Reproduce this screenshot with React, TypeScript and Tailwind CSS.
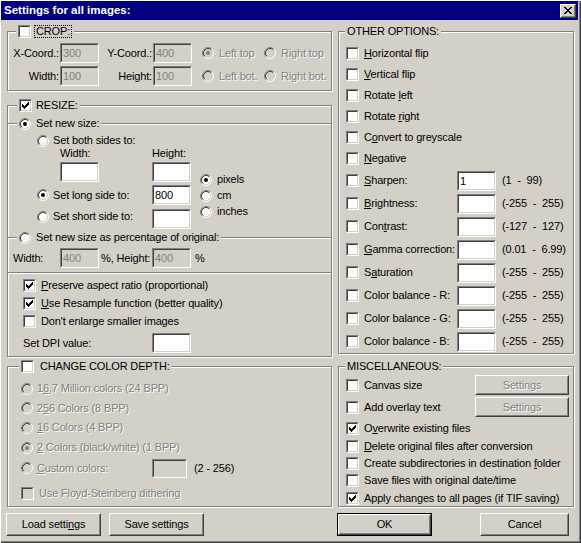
import React from "react";

type Kids = { children?: React.ReactNode };

const dis = "text-[#808080] [text-shadow:1px_1px_0_#fff]";

function CheckMark({ color }: { color: string }) {
  return (
    <svg width="7" height="7" viewBox="0 0 7 7" shapeRendering="crispEdges">
      <path
        fill={color}
        d="M6 0h1v1h-1zM5 1h2v1h-2zM0 2h1v1h-1zM4 2h3v1h-3zM0 3h2v1h-2zM3 3h3v1h-3zM0 4h5v1h-5zM1 5h3v1h-3zM2 6h1v1h-1z"
      />
    </svg>
  );
}

function Box({ checked = false, disabled = false }: { checked?: boolean; disabled?: boolean }) {
  return (
    <span className="flex h-[13px] w-[13px] shrink-0 border border-t-[#808080] border-l-[#808080] border-r-white border-b-white">
      <span
        className={`flex flex-1 items-center justify-center border border-t-[#404040] border-l-[#404040] border-r-[#d4d0c8] border-b-[#d4d0c8] ${
          disabled ? "bg-[#d4d0c8]" : "bg-white"
        }`}
      >
        {checked && <CheckMark color={disabled ? "#808080" : "#000"} />}
      </span>
    </span>
  );
}

function Radio({ checked = false, disabled = false }: { checked?: boolean; disabled?: boolean }) {
  return (
    <svg width="12" height="12" viewBox="0 0 12 12" className="shrink-0">
      <circle cx="6" cy="6" r="4.5" fill={disabled ? "#d4d0c8" : "#fff"} />
      <path d="M2.11 9.89A5.5 5.5 0 0 1 9.89 2.11" stroke="#808080" fill="none" />
      <path d="M9.89 2.11A5.5 5.5 0 0 1 2.11 9.89" stroke="#fff" fill="none" />
      <path d="M2.82 9.18A4.5 4.5 0 0 1 9.18 2.82" stroke="#404040" fill="none" />
      <path d="M9.18 2.82A4.5 4.5 0 0 1 2.82 9.18" stroke="#d4d0c8" fill="none" />
      {checked && <circle cx="6" cy="6" r="2" fill={disabled ? "#808080" : "#000"} />}
    </svg>
  );
}

function Check({
  checked = false,
  disabled = false,
  children,
  className = "",
}: Kids & { checked?: boolean; disabled?: boolean; className?: string }) {
  return (
    <div className={`flex h-[13px] items-center gap-[5px] whitespace-nowrap ${className}`}>
      <Box checked={checked} disabled={disabled} />
      <span className={disabled ? dis : ""}>{children}</span>
    </div>
  );
}

function Option({
  checked = false,
  disabled = false,
  wide = false,
  children,
  className = "",
}: Kids & { checked?: boolean; disabled?: boolean; wide?: boolean; className?: string }) {
  return (
    <div className={`flex h-[13px] items-center whitespace-nowrap ${wide ? "gap-[5px]" : "gap-[4px]"} ${className}`}>
      <Radio checked={checked} disabled={disabled} />
      <span className={disabled ? dis : ""}>{children}</span>
    </div>
  );
}

function Field({
  value = "",
  disabled = false,
  className = "h-[20px] w-[39px]",
}: {
  value?: string;
  disabled?: boolean;
  className?: string;
}) {
  return (
    <span className={`flex shrink-0 border border-t-[#808080] border-l-[#808080] border-r-white border-b-white ${className}`}>
      <span
        className={`flex flex-1 items-center pl-[1px] border border-t-[#404040] border-l-[#404040] border-r-[#d4d0c8] border-b-[#d4d0c8] ${
          disabled ? "bg-[#d4d0c8] text-[#808080]" : "bg-white"
        }`}
      >
        {value}
      </span>
    </span>
  );
}

function Button({
  children,
  className = "",
  disabled = false,
  primary = false,
}: Kids & { className?: string; disabled?: boolean; primary?: boolean }) {
  return (
    <div className={`flex ${primary ? "border border-black" : ""} ${className}`}>
      <span className="flex flex-1 border border-t-white border-l-white border-r-[#404040] border-b-[#404040]">
        <span
          className={`flex flex-1 items-center justify-center border border-t-transparent border-l-transparent border-r-[#808080] border-b-[#808080] ${
            disabled ? dis : ""
          }`}
        >
          {children}
        </span>
      </span>
    </div>
  );
}

function Group({
  className = "",
  head,
  headClass = "",
  children,
}: Kids & { className?: string; head: React.ReactNode; headClass?: string }) {
  return (
    <div className={`relative border border-[#808080] shadow-[inset_1px_1px_0_#fff,1px_1px_0_#fff] ${className}`}>
      <div className={`absolute -top-[7px] flex h-[13px] items-center bg-[#d4d0c8] px-[2px] whitespace-nowrap ${headClass}`}>
        {head}
      </div>
      {children}
    </div>
  );
}

function CropRow({
  l1,
  v1,
  l2,
  v2,
  r1,
  r2,
  first = false,
}: {
  l1: string;
  v1: string;
  l2: string;
  v2: string;
  r1: string;
  r2: string;
  first?: boolean;
}) {
  return (
    <div className="flex h-[20px] items-center">
      <span className="w-[52px] pr-[1px] text-right">{l1}</span>
      <Field value={v1} disabled />
      <span className="w-[54px] pr-[1px] text-right">{l2}</span>
      <Field value={v2} disabled />
      <Option disabled wide checked={first} className="ml-[10px] w-[62px]">
        {r1}
      </Option>
      <Option disabled wide>
        {r2}
      </Option>
    </div>
  );
}

function ValueRow({ label, value = "", range }: { label: React.ReactNode; value?: string; range: string }) {
  return (
    <div className="flex h-[23px] items-start pt-[2px]">
      <div className="flex h-[19px] w-[111px] items-center">
        <Check>{label}</Check>
      </div>
      <Field value={value} />
      <span className="ml-[6px] flex h-[19px] items-center whitespace-pre">{range}</span>
    </div>
  );
}

function CloseButton() {
  return (
    <div className="flex h-[14px] w-[16px] border border-t-white border-l-white border-r-[#404040] border-b-[#404040] bg-[#d4d0c8]">
      <span className="flex flex-1 items-center justify-center border border-t-transparent border-l-transparent border-r-[#808080] border-b-[#808080]">
        <svg width="8" height="7" viewBox="0 0 8 7" shapeRendering="crispEdges">
          <path
            fill="#000"
            d="M0 0h2v1h-2zM6 0h2v1h-2zM1 1h2v1h-2zM5 1h2v1h-2zM2 2h4v1h-4zM3 3h2v1h-2zM2 4h4v1h-4zM1 5h2v1h-2zM5 5h2v1h-2zM0 6h2v1h-2zM6 6h2v1h-2z"
          />
        </svg>
      </span>
    </div>
  );
}

export default function App() {
  return (
    <div className="h-[543px] w-[581px] overflow-hidden bg-[#d4d0c8] font-['Liberation_Sans',Arial,sans-serif] text-[11px] leading-[13px] tracking-[-0.15px] text-black shadow-[inset_1px_1px_0_#fff,inset_-1px_-1px_0_#404040,inset_-2px_-2px_0_#808080]">
      {/* title bar */}
      <div className="ml-[1px] mt-[1px] flex h-[19px] w-[577px] items-center justify-between bg-[#000080] pl-[3px] pr-[2px]">
        <span className="text-[11.5px] font-bold tracking-normal text-white">Settings for all images:</span>
        <CloseButton />
      </div>

      <div className="flex gap-[6px] pl-[7px] pt-[11px]">
        {/* left column */}
        <div className="flex w-[325px] flex-col">
          <Group
            className="h-[60px]"
            headClass="left-[8px] gap-[3px]"
            head={
              <>
                <Box />
                <span className="flex h-[13px] items-center border border-dotted border-black px-[1px]">CROP:</span>
              </>
            }
          >
            <div className="flex flex-col gap-[3px] pt-[11px]">
              <CropRow l1="X-Coord.:" v1="300" l2="Y-Coord.:" v2="400" r1="Left top" r2="Right top" first />
              <CropRow l1="Width:" v1="100" l2="Height:" v2="100" r1="Left bot." r2="Right bot." />
            </div>
          </Group>

          <Group
            className="mt-[14px] h-[252px]"
            headClass="left-[9px] gap-[4px]"
            head={
              <>
                <Box checked />
                <span>RESIZE:</span>
              </>
            }
          >
            {/* set new size */}
            <div className="relative mt-[17px] h-[114px] border-t border-[#808080] pt-[10px] shadow-[inset_0_1px_0_#fff]">
              <div className="absolute -top-[7px] left-[9px] flex h-[13px] items-center bg-[#d4d0c8] px-[2px]">
                <Option checked wide>
                  Set new size:
                </Option>
              </div>
              <div className="flex">
                <div className="flex w-[184px] flex-col">
                  <Option className="pl-[29px]">Set both sides to:</Option>
                  <div className="flex h-[13px] items-center">
                    <span className="ml-[52px] w-[92px]">Width:</span>
                    <span>Height:</span>
                  </div>
                  <div className="mt-[2px] flex h-[20px]">
                    <Field className="ml-[52px] h-[20px] w-[39px]" />
                    <Field className="ml-[53px] h-[20px] w-[39px]" />
                  </div>
                  <div className="mt-[3px] flex h-[20px] items-center">
                    <Option checked className="w-[144px] pl-[29px]">
                      Set long side to:
                    </Option>
                    <Field value="800" />
                  </div>
                  <div className="mt-[4px] flex h-[20px] items-start">
                    <Option className="mt-[1px] w-[144px] pl-[29px]">Set short side to:</Option>
                    <Field />
                  </div>
                </div>
                <div className="ml-[8px] flex flex-col gap-[3px] pt-[39px]">
                  <Option checked wide>
                    pixels
                  </Option>
                  <Option wide>cm</Option>
                  <Option wide>inches</Option>
                </div>
              </div>
            </div>

            {/* percentage */}
            <div className="relative h-[36px] border-y border-[#808080] pt-[10px] shadow-[inset_0_1px_0_#fff,0_1px_0_#fff]">
              <div className="absolute -top-[7px] left-[9px] flex h-[13px] items-center bg-[#d4d0c8] px-[2px]">
                <Option wide>Set new size as percentage of original:</Option>
              </div>
              <div className="flex h-[20px] items-center">
                <span className="w-[52px] pl-[5px]">Width:</span>
                <Field value="400" disabled />
                <span className="w-[53px] pl-[2px]">%, Height:</span>
                <Field value="400" disabled />
                <span className="ml-[4px]">%</span>
              </div>
            </div>

            <div className="mt-[6px] flex flex-col gap-[5px] pl-[15px]">
              <Check checked>
                <u>P</u>reserve aspect ratio (proportional)
              </Check>
              <Check checked>
                <u>U</u>se Resample function (better quality)
              </Check>
              <Check>Don't enlarge smaller images</Check>
            </div>
            <div className="mt-[5px] flex h-[20px] items-center pl-[15px]">
              <span className="w-[129px]">Set DPI value:</span>
              <Field />
            </div>
          </Group>

          <Group
            className="mt-[9px] h-[141px]"
            headClass="left-[11px] gap-[6px]"
            head={
              <>
                <Box />
                <span>CHANGE COLOR DEPTH:</span>
              </>
            }
          >
            <div className="flex flex-col gap-[6.7px] pl-[13px] pt-[15px]">
              <Option disabled>
                1<u>6</u>,7 Million colors (24 BPP)
              </Option>
              <Option disabled>
                2<u>5</u>6 Colors (8 BPP)
              </Option>
              <Option disabled>
                <u>1</u>6 Colors (4 BPP)
              </Option>
              <Option disabled checked>
                <u>2</u> Colors (black/white) (1 BPP)
              </Option>
            </div>
            <div className="mt-[4px] flex h-[20px] items-center pl-[13px]">
              <Option disabled className="w-[131px]">
                <u>C</u>ustom colors:
              </Option>
              <Field disabled className="h-[19px] w-[35px]" />
              <span className="ml-[7px]">(2 - 256)</span>
            </div>
            <Check disabled className="ml-[13px] mt-[9px]">
              Use Floyd-Steinberg dithering
            </Check>
          </Group>

          <div className="-ml-[1px] mt-[6px] flex h-[23px] gap-[8px]">
            <Button className="w-[95px]">
              Load setti<u>n</u>gs
            </Button>
            <Button className="w-[95px]">Save settings</Button>
          </div>
        </div>

        {/* right column */}
        <div className="flex w-[236px] flex-col">
          <Group className="h-[323px]" headClass="left-[6px]" head={<span>OTHER OPTIONS:</span>}>
            <div className="flex flex-col pl-[7px] pt-[11px]">
              {[
                <><u>H</u>orizontal flip</>,
                <><u>V</u>ertical flip</>,
                <>Rotate <u>l</u>eft</>,
                <>Rotate <u>r</u>ight</>,
                <>C<u>o</u>nvert to greyscale</>,
                <><u>N</u>egative</>,
              ].map((label, i) => (
                <div key={i} className="flex h-[21px] items-center">
                  <Check>{label}</Check>
                </div>
              ))}
              <ValueRow label={<><u>S</u>harpen:</>} value="1" range="(1  -  99)" />
              <ValueRow label={<><u>B</u>rightness:</>} range="(-255  -  255)" />
              <ValueRow label={<>Con<u>t</u>rast:</>} range="(-127  -  127)" />
              <ValueRow label={<><u>G</u>amma correction:</>} range="(0.01  -  6.99)" />
              <ValueRow label={<>S<u>a</u>turation</>} range="(-255  -  255)" />
              <ValueRow label="Color balance - R:" range="(-255  -  255)" />
              <ValueRow label="Color balance - G:" range="(-255  -  255)" />
              <ValueRow label="Color balance - B:" range="(-255  -  255)" />
            </div>
          </Group>

          <Group className="mt-[12px] h-[141px]" headClass="left-[6px]" head={<span>MISCELLANEOUS:</span>}>
            <div className="flex flex-col pl-[7px] pt-[8px]">
              <div className="flex h-[20px] items-center">
                <Check className="w-[129px]">Canvas size</Check>
                <Button disabled className="h-[20px] w-[94px]">
                  Settings
                </Button>
              </div>
              <div className="mt-[2px] flex h-[20px] items-center">
                <Check className="w-[129px]">Add overlay text</Check>
                <Button disabled className="h-[20px] w-[94px]">
                  Settings
                </Button>
              </div>
              <div className="mt-[3px] flex flex-col">
                {[
                  { on: true, label: <>O<u>v</u>erwrite existing files</> },
                  { on: false, label: <><u>D</u>elete original files after conversion</> },
                  { on: false, label: <>Create subdirectories in destination <u>f</u>older</> },
                  { on: false, label: <>Save files with original date/time</> },
                  { on: true, label: <>Apply changes to all pages (if TIF saving)</> },
                ].map((row, i) => (
                  <div key={i} className="flex h-[17.4px] items-center">
                    <Check checked={row.on}>{row.label}</Check>
                  </div>
                ))}
              </div>
            </div>
          </Group>

          <div className="-ml-[1px] mt-[6px] flex h-[23px] gap-[48px]">
            <Button primary className="w-[95px]">
              OK
            </Button>
            <Button className="w-[89px]">Cancel</Button>
          </div>
        </div>
      </div>
    </div>
  );
}
